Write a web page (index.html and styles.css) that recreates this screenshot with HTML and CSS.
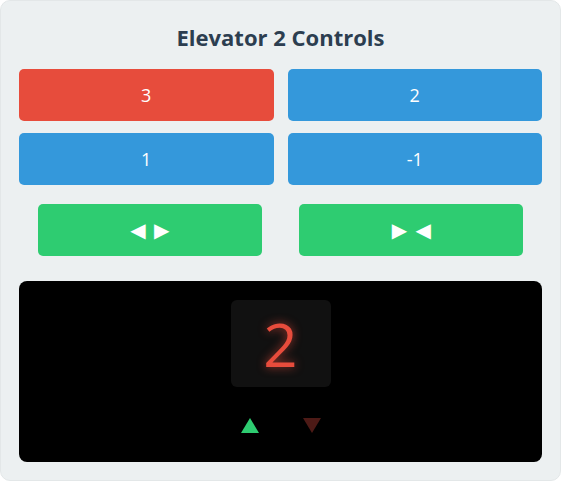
FILE: index.html
```html
<!DOCTYPE html>
<html>
<head>
<meta charset="utf-8">
<link rel="stylesheet" href="styles.css">
</head>
<body>
<div class="card">
  <h2 class="title">Elevator 2 Controls</h2>
  <div class="floors">
    <button class="btn floor active">3</button>
    <button class="btn floor">2</button>
    <button class="btn floor">1</button>
    <button class="btn floor">-1</button>
  </div>
  <div class="doors">
    <button class="btn door">◀ ▶</button>
    <button class="btn door">▶ ◀</button>
  </div>
  <div class="display">
    <div class="digit-box"><span class="digit">2</span></div>
    <div class="arrows">
      <span class="arrow up"></span>
      <span class="arrow down"></span>
    </div>
  </div>
</div>
</body>
</html>
```

FILE: styles.css
```css
html, body {
  margin: 0;
  padding: 0;
  background: #ffffff;
}
body {
  font-family: "Open Sans", "Noto Sans", sans-serif;
}
.card {
  box-sizing: border-box;
  width: 561px;
  height: 481px;
  background: #ecf0f1;
  border-radius: 10px;
  border: 1px solid #e3e7e8;
  padding: 19px 18px 18px;
  display: flex;
  flex-direction: column;
}
.title {
  margin: 0;
  text-align: center;
  font-size: 22px;
  font-weight: 700;
  color: #2c3e50;
  line-height: 34px;
}
.floors {
  margin-top: 15px;
  display: grid;
  grid-template-columns: 1fr 1fr;
  column-gap: 14px;
  row-gap: 12px;
}
.btn {
  border: none;
  border-radius: 5px;
  color: #ffffff;
  font-family: "Open Sans", "Noto Sans", sans-serif;
  font-size: 18px;
  height: 52px;
  padding: 0;
}
.floor {
  background: #3498db;
}
.floor.active {
  background: #e74c3c;
}
.doors {
  margin-top: 19px;
  display: flex;
  justify-content: space-around;
}
.door {
  width: 224px;
  background: #2ecc71;
  font-family: "DejaVu Sans", sans-serif;
  font-size: 20px;
  word-spacing: 2px;
}
.display {
  margin-top: 25px;
  flex: 1;
  background: #000000;
  border-radius: 8px;
  display: flex;
  flex-direction: column;
  align-items: center;
  padding-top: 19px;
}
.digit-box {
  width: 100px;
  height: 87px;
  background: #111111;
  border-radius: 6px;
  display: flex;
  align-items: center;
  justify-content: center;
}
.digit {
  color: #e74c3c;
  font-size: 60px;
  line-height: 1;
  text-shadow: 0 0 10px rgba(231, 76, 60, 0.7);
}
.arrows {
  margin-top: 31px;
  display: flex;
  gap: 44px;
}
.arrow {
  width: 0;
  height: 0;
  border-left: 9px solid transparent;
  border-right: 9px solid transparent;
}
.arrow.up {
  border-bottom: 15px solid #2ecc71;
}
.arrow.down {
  border-top: 15px solid #4d1a16;
}
```
